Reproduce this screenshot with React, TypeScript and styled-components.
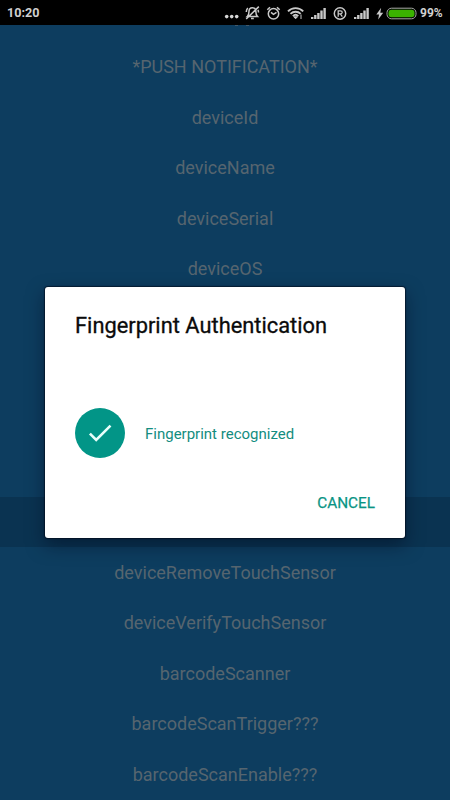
import React from 'react';
import styled, { createGlobalStyle } from 'styled-components';

const Global = createGlobalStyle`
  * { box-sizing: border-box; }
  html, body { margin: 0; background: #000; }
  body { font-family: Roboto, "Liberation Sans", sans-serif; }
`;

const Screen = styled.div`
  position: relative;
  width: 450px;
  height: 800px;
  overflow: hidden;
  display: flex;
  flex-direction: column;
  background: #0d3d5f;
`;

const StatusBar = styled.header`
  height: 25px;
  flex: none;
  display: flex;
  align-items: center;
  justify-content: space-between;
  padding: 1px 8px 0 7px;
  background: #000;
  color: #d0d0d0;
  font-weight: 700;
  line-height: 24px;
`;

const Clock = styled.span`
  font-size: 12.6px;
`;

const StatusIcons = styled.svg`
  display: block;
  width: 194px;
  height: 25px;
  margin-left: auto;
  margin-right: 3px;
`;

const Percent = styled.span`
  font-size: 12px;
  width: 22px;
  white-space: nowrap;
`;

const List = styled.main`
  flex: none;
  display: flex;
  flex-direction: column;
`;

const ClippedRow = styled.div`
  height: 17px;
  display: flex;
  justify-content: center;
  gap: 8px;
  padding-left: 33px;
`;

const Descender = styled.i`
  width: 3px;
  height: 1px;
  background: #42596a;
`;

const Row = styled.div<{ $pressed?: boolean }>`
  height: 50.55px;
  flex: none;
  display: flex;
  align-items: center;
  justify-content: center;
  background: ${(p) => (p.$pressed ? '#0a3351' : 'transparent')};
  color: #56656f;
  font-size: 18px;
  line-height: 22px;
`;

const Overlay = styled.div`
  position: absolute;
  inset: 25px 0 0;
  display: flex;
  align-items: center;
  justify-content: center;
`;

const Dialog = styled.section`
  width: 360px;
  height: 251px;
  display: flex;
  flex-direction: column;
  padding: 24px 30px 21px;
  border-radius: 3px;
  background: #fff;
  box-shadow: 0 0 1px 1px rgba(0, 8, 24, 0.6), 0 7px 18px rgba(0, 10, 30, 0.5);
`;

const Title = styled.h1`
  margin: 0;
  color: #0b0b0b;
  font-size: 21.85px;
  font-weight: 400;
  -webkit-text-stroke: 0.3px #0b0b0b;
  line-height: 29px;
  white-space: nowrap;
`;

const Status = styled.div`
  display: flex;
  align-items: center;
  gap: 20px;
  height: 50px;
  margin-top: 67.5px;
  color: #138d80;
  font-size: 15px;
  white-space: nowrap;
`;

const StatusText = styled.span`
  padding-top: 2px;
`;

const Badge = styled.svg`
  width: 50px;
  height: 50px;
  flex: none;
`;

const Cancel = styled.button`
  margin: auto 0 0 auto;
  padding: 0;
  border: 0;
  background: none;
  color: #0a9484;
  font: 400 15.3px/28px Roboto, "Liberation Sans", sans-serif;
  -webkit-text-stroke: 0.25px #0a9484;
`;

const rows = [
  '*PUSH NOTIFICATION*',
  'deviceId',
  'deviceName',
  'deviceSerial',
  'deviceOS',
  '', '', '', '', '',
  'deviceRemoveTouchSensor',
  'deviceVerifyTouchSensor',
  'barcodeScanner',
  'barcodeScanTrigger???',
  'barcodeScanEnable???',
];
const PRESSED_ROW = 9;

const Signal = ({ x }: { x: number }) => (
  <g fill="#c9c9c9">
    {[2, 4, 6, 8.5, 11].map((h, i) => (
      <rect key={h} x={x + i * 3.1} y={18 - h} width="2.4" height={h} />
    ))}
  </g>
);

const Icons = () => (
  <StatusIcons viewBox="223 0 194 25" fill="none" stroke="#c9c9c9" strokeWidth="1.5">
    <g fill="#d6d6d6" stroke="none">
      <circle cx="226.700" cy="15.600" r="1.800" />
      <circle cx="231.700" cy="15.600" r="1.800" />
      <circle cx="236.700" cy="15.600" r="1.800" />
    </g>
    <path d="M247.300 15.500c1.400-1.300 1.600-2.600 1.600-4.600 0-2.500 1.300-4.200 3.500-4.200s3.500 1.700 3.500 4.200c0 2 .3 3.300 1.600 4.600zM251 17.600h2.800M246.200 18 258.800 5.600M246.300 11c0-1.800.5-3 1.500-4M258.500 11.500c0-1-.1-1.900-.6-2.700" />
    <circle cx="273.500" cy="12.800" r="5.200" />
    <path d="M267.300 8.800 270 6.200M277 6.200l2.700 2.600M271 11.300l2.500 2 3-2" />
    <path d="M288 10.300c4-4.300 11.200-4.300 15.200 0M290.500 12.900c2.900-2.800 7.300-2.800 10.200 0M292.900 15.100c1.600-1.500 3.800-1.500 5.400 0" strokeWidth="1.900" />
    <path d="m293.800 15.800 1.800 2 1.800-2zM301 13.500v4.500" fill="#c9c9c9" strokeWidth="1" />
    <g stroke="none"><Signal x={311} /><Signal x={354} /></g>
    <circle cx="340" cy="12.500" r="5.700" />
    <path d="M338.200 15.700V9.800h2.300c2.300 0 2.300 3 0 3h-2.300M340.400 12.800l1.900 2.900" strokeWidth="1.300" />
    <path d="m381 7-4.700 6.500h2.700l-.8 5 5-6.700h-2.900l.8-4.800z" fill="#c9c9c9" stroke="none" />
    <rect x="387" y="7.200" width="29" height="10.600" rx="4.500" stroke="#a8aca5" strokeWidth="1" />
    <rect x="388.500" y="8.700" width="26" height="7.600" rx="3" fill="#3bb300" stroke="none" />
  </StatusIcons>
);

export default function App() {
  return (
    <>
      <Global />
      <Screen>
        <StatusBar>
          <Clock>10:20</Clock>
          <Icons />
          <Percent>99%</Percent>
        </StatusBar>
        <List>
          <ClippedRow><Descender /><Descender /></ClippedRow>
          {rows.map((name, i) => (
            <Row key={i} $pressed={i === PRESSED_ROW}>{name}</Row>
          ))}
        </List>
        <Overlay>
          <Dialog role="dialog" aria-labelledby="dialog-title">
            <Title id="dialog-title">Fingerprint Authentication</Title>
            <Status>
              <Badge viewBox="0 0 50 50">
                <circle cx="25" cy="25" r="25" fill="#029587" />
                <path d="m14.900 25.600 6.300 6.300 14.300-14.300" fill="none" stroke="#e9fffb" strokeWidth="2.600" />
              </Badge>
              <StatusText>Fingerprint recognized</StatusText>
            </Status>
            <Cancel>CANCEL</Cancel>
          </Dialog>
        </Overlay>
      </Screen>
    </>
  );
}
